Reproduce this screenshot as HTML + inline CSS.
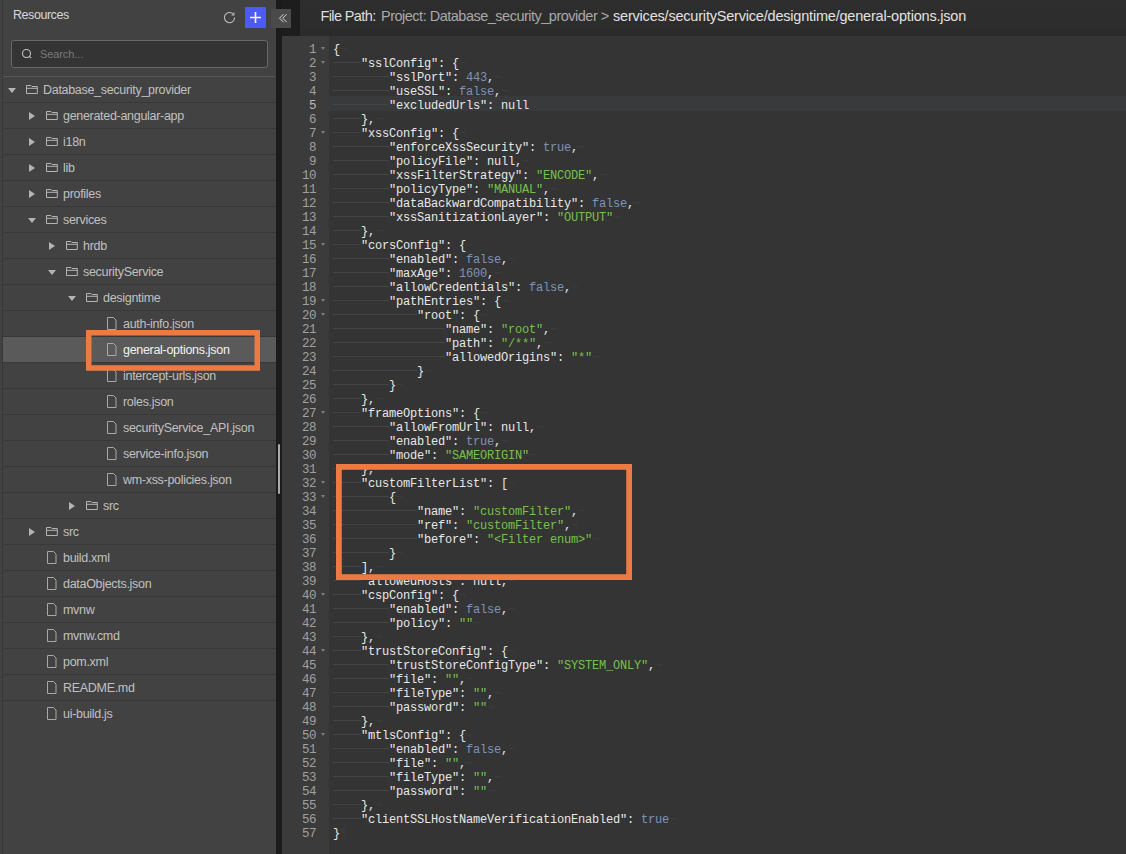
<!DOCTYPE html>
<html><head><meta charset="utf-8">
<style>
*{box-sizing:border-box;margin:0;padding:0}
html,body{width:1126px;height:854px;overflow:hidden;background:#1d1d1d;font-family:"Liberation Sans",sans-serif}
#side{position:absolute;left:0;top:0;width:276px;height:854px;background:#424242}
#side .vline{position:absolute;left:2px;top:0;width:1px;height:854px;background:#383838}
#res{position:absolute;left:13px;top:7px;font-size:12.5px;color:#d8d8d8;line-height:16px;letter-spacing:-0.45px}
#refresh{position:absolute;left:222px;top:10px;width:15px;height:15px}
#plus{position:absolute;left:245px;top:7px;width:21px;height:21px;background:#4d5af4;border-radius:1px}
#collapse{position:absolute;left:271px;top:9px;width:20px;height:19px;background:#4a4a4a}
#search{position:absolute;left:11px;top:40px;width:257px;height:28px;border:1px solid #686868;border-radius:3px;background:#343434}
#search span{position:absolute;left:28px;top:7px;font-size:11px;letter-spacing:-0.1px;color:#7a7a7a}
#divider{position:absolute;left:3px;top:76px;width:272px;height:1px;background:#555}
#tree{position:absolute;left:3px;top:77px;width:273px}
.r{position:relative;height:26px;border-bottom:1px solid #383838;font-size:12.5px;letter-spacing:-0.3px;color:#c0c0c0;white-space:nowrap}
.r .tx{position:absolute;top:5px;line-height:16px}
.r:last-child{border-bottom:0}
.r.sel{background:#5a5a5a;color:#f2f2f2}
.car{position:absolute;width:0;height:0}
.car.d{border-left:4px solid transparent;border-right:4px solid transparent;border-top:5px solid #b4b4b4;top:11px}
.car.rt{border-top:4px solid transparent;border-bottom:4px solid transparent;border-left:6px solid #b4b4b4;top:9px}
.fo{position:absolute;top:8px}
.fi{position:absolute;top:6px}
#split{position:absolute;left:276px;top:0;width:6px;height:854px;background:#1b1b1b}
#sb{position:absolute;left:277.6px;top:444px;width:2.6px;height:50px;background:#aaa;border-radius:1px}
#hdr{position:absolute;left:300px;top:0;width:826px;height:36px;background:linear-gradient(#2e2e2e,#2c2c2c 30px,#2a2a2a 34px,#2b2b2b 36px)}
#hdr .tx{position:absolute;top:8px;font-size:14.5px;line-height:17px;white-space:nowrap;color:#e2e2e2}
#hdr .p{color:#a8a8a8}
#ed{position:absolute;left:282px;top:36px;width:844px;height:818px;background:#343434}
#gut{position:absolute;left:0;top:0;width:47px;height:818px;background:#3b3b3b}
.g{position:relative;height:14px;line-height:14px;text-align:right;padding-right:13px;font-family:"Liberation Mono",monospace;font-size:12.5px;letter-spacing:-0.45px;color:#a0a0a0}
.g u{position:absolute;right:4.5px;top:4px;width:0;height:0;border-left:2.75px solid transparent;border-right:2.75px solid transparent;border-top:3px solid #7c7c7c}
.g.ga{color:#bababa}
#gl{position:absolute;left:0;top:7px;width:47px}
#code{position:absolute;left:51px;top:7px;right:0}
.l{height:14px;line-height:14px;white-space:pre;font-family:"Liberation Mono",monospace;font-size:12px;letter-spacing:-0.2px;color:#e8e8e8}
#al{position:absolute;left:47px;top:60px;width:797px;height:15px;background:#393a3c}
.l b{font-weight:normal}
.s{color:#74c246}
.n{color:#7d93b8}
.t{display:inline-block;height:14px;vertical-align:top;background:linear-gradient(#0000 5px,#444 5px,#444 6px,#0000 6px)}
.e{font-style:normal;color:#3b3b3b}
#boxes{position:absolute;left:0;top:0}
</style></head><body>
<div id="side">
<div class="vline"></div>
<div id="res">Resources</div>
<svg id="refresh" viewBox="0 0 15 15"><path d="M12.6 7.6a5.1 5.1 0 1 1-1.5-3.6" fill="none" stroke="#c4c4c4" stroke-width="1.05"/><path d="M11.9 2.6v2.3H9.6" fill="none" stroke="#c4c4c4" stroke-width="1.05"/></svg>
<div id="plus"><svg width="21" height="21" viewBox="0 0 21 21"><path d="M10.5 5v11M5 10.5h11" stroke="#f4f4ff" stroke-width="1.6"/></svg></div>
<div id="search"><svg style="position:absolute;left:9px;top:7px" width="12" height="12" viewBox="0 0 12 12"><circle cx="5.5" cy="5.5" r="4" fill="none" stroke="#c4c4c4" stroke-width="1.1"/><path d="M8.4 8.4l1.8 1.8" stroke="#c4c4c4" stroke-width="1.1"/></svg><span>Search...</span></div>
<div id="divider"></div>
<div id="tree">
<div class="r"><i class="car d" style="left:5px"></i><svg class="fo" style="left:23px" width="13" height="10" viewBox="0 0 13 10"><path d="M0.5 0.5h4.5l1 1h5.3v7h-10.8z M0.5 3.3h10.8" fill="none" stroke="#b4b4b4" stroke-width="1"/></svg><span class="tx" style="left:40px">Database_security_provider</span></div>
<div class="r"><i class="car rt" style="left:26px"></i><svg class="fo" style="left:43px" width="13" height="10" viewBox="0 0 13 10"><path d="M0.5 0.5h4.5l1 1h5.3v7h-10.8z M0.5 3.3h10.8" fill="none" stroke="#b4b4b4" stroke-width="1"/></svg><span class="tx" style="left:60px">generated-angular-app</span></div>
<div class="r"><i class="car rt" style="left:26px"></i><svg class="fo" style="left:43px" width="13" height="10" viewBox="0 0 13 10"><path d="M0.5 0.5h4.5l1 1h5.3v7h-10.8z M0.5 3.3h10.8" fill="none" stroke="#b4b4b4" stroke-width="1"/></svg><span class="tx" style="left:60px">i18n</span></div>
<div class="r"><i class="car rt" style="left:26px"></i><svg class="fo" style="left:43px" width="13" height="10" viewBox="0 0 13 10"><path d="M0.5 0.5h4.5l1 1h5.3v7h-10.8z M0.5 3.3h10.8" fill="none" stroke="#b4b4b4" stroke-width="1"/></svg><span class="tx" style="left:60px">lib</span></div>
<div class="r"><i class="car rt" style="left:26px"></i><svg class="fo" style="left:43px" width="13" height="10" viewBox="0 0 13 10"><path d="M0.5 0.5h4.5l1 1h5.3v7h-10.8z M0.5 3.3h10.8" fill="none" stroke="#b4b4b4" stroke-width="1"/></svg><span class="tx" style="left:60px">profiles</span></div>
<div class="r"><i class="car d" style="left:25px"></i><svg class="fo" style="left:43px" width="13" height="10" viewBox="0 0 13 10"><path d="M0.5 0.5h4.5l1 1h5.3v7h-10.8z M0.5 3.3h10.8" fill="none" stroke="#b4b4b4" stroke-width="1"/></svg><span class="tx" style="left:60px">services</span></div>
<div class="r"><i class="car rt" style="left:46px"></i><svg class="fo" style="left:63px" width="13" height="10" viewBox="0 0 13 10"><path d="M0.5 0.5h4.5l1 1h5.3v7h-10.8z M0.5 3.3h10.8" fill="none" stroke="#b4b4b4" stroke-width="1"/></svg><span class="tx" style="left:80px">hrdb</span></div>
<div class="r"><i class="car d" style="left:45px"></i><svg class="fo" style="left:63px" width="13" height="10" viewBox="0 0 13 10"><path d="M0.5 0.5h4.5l1 1h5.3v7h-10.8z M0.5 3.3h10.8" fill="none" stroke="#b4b4b4" stroke-width="1"/></svg><span class="tx" style="left:80px">securityService</span></div>
<div class="r"><i class="car d" style="left:65px"></i><svg class="fo" style="left:83px" width="13" height="10" viewBox="0 0 13 10"><path d="M0.5 0.5h4.5l1 1h5.3v7h-10.8z M0.5 3.3h10.8" fill="none" stroke="#b4b4b4" stroke-width="1"/></svg><span class="tx" style="left:100px">designtime</span></div>
<div class="r"><svg class="fi" style="left:104px" width="10" height="13" viewBox="0 0 10 13"><path d="M0.5 0.5h6l2.5 2.5v9.5h-8.5z" fill="none" stroke="#a8a8a8" stroke-width="1"/></svg><span class="tx" style="left:120px">auth-info.json</span></div>
<div class="r sel"><svg class="fi" style="left:104px" width="10" height="13" viewBox="0 0 10 13"><path d="M0.5 0.5h6l2.5 2.5v9.5h-8.5z" fill="none" stroke="#a8a8a8" stroke-width="1"/></svg><span class="tx" style="left:120px">general-options.json</span></div>
<div class="r"><svg class="fi" style="left:104px" width="10" height="13" viewBox="0 0 10 13"><path d="M0.5 0.5h6l2.5 2.5v9.5h-8.5z" fill="none" stroke="#a8a8a8" stroke-width="1"/></svg><span class="tx" style="left:120px">intercept-urls.json</span></div>
<div class="r"><svg class="fi" style="left:104px" width="10" height="13" viewBox="0 0 10 13"><path d="M0.5 0.5h6l2.5 2.5v9.5h-8.5z" fill="none" stroke="#a8a8a8" stroke-width="1"/></svg><span class="tx" style="left:120px">roles.json</span></div>
<div class="r"><svg class="fi" style="left:104px" width="10" height="13" viewBox="0 0 10 13"><path d="M0.5 0.5h6l2.5 2.5v9.5h-8.5z" fill="none" stroke="#a8a8a8" stroke-width="1"/></svg><span class="tx" style="left:120px">securityService_API.json</span></div>
<div class="r"><svg class="fi" style="left:104px" width="10" height="13" viewBox="0 0 10 13"><path d="M0.5 0.5h6l2.5 2.5v9.5h-8.5z" fill="none" stroke="#a8a8a8" stroke-width="1"/></svg><span class="tx" style="left:120px">service-info.json</span></div>
<div class="r"><svg class="fi" style="left:104px" width="10" height="13" viewBox="0 0 10 13"><path d="M0.5 0.5h6l2.5 2.5v9.5h-8.5z" fill="none" stroke="#a8a8a8" stroke-width="1"/></svg><span class="tx" style="left:120px">wm-xss-policies.json</span></div>
<div class="r"><i class="car rt" style="left:66px"></i><svg class="fo" style="left:83px" width="13" height="10" viewBox="0 0 13 10"><path d="M0.5 0.5h4.5l1 1h5.3v7h-10.8z M0.5 3.3h10.8" fill="none" stroke="#b4b4b4" stroke-width="1"/></svg><span class="tx" style="left:100px">src</span></div>
<div class="r"><i class="car rt" style="left:26px"></i><svg class="fo" style="left:43px" width="13" height="10" viewBox="0 0 13 10"><path d="M0.5 0.5h4.5l1 1h5.3v7h-10.8z M0.5 3.3h10.8" fill="none" stroke="#b4b4b4" stroke-width="1"/></svg><span class="tx" style="left:60px">src</span></div>
<div class="r"><svg class="fi" style="left:44px" width="10" height="13" viewBox="0 0 10 13"><path d="M0.5 0.5h6l2.5 2.5v9.5h-8.5z" fill="none" stroke="#a8a8a8" stroke-width="1"/></svg><span class="tx" style="left:60px">build.xml</span></div>
<div class="r"><svg class="fi" style="left:44px" width="10" height="13" viewBox="0 0 10 13"><path d="M0.5 0.5h6l2.5 2.5v9.5h-8.5z" fill="none" stroke="#a8a8a8" stroke-width="1"/></svg><span class="tx" style="left:60px">dataObjects.json</span></div>
<div class="r"><svg class="fi" style="left:44px" width="10" height="13" viewBox="0 0 10 13"><path d="M0.5 0.5h6l2.5 2.5v9.5h-8.5z" fill="none" stroke="#a8a8a8" stroke-width="1"/></svg><span class="tx" style="left:60px">mvnw</span></div>
<div class="r"><svg class="fi" style="left:44px" width="10" height="13" viewBox="0 0 10 13"><path d="M0.5 0.5h6l2.5 2.5v9.5h-8.5z" fill="none" stroke="#a8a8a8" stroke-width="1"/></svg><span class="tx" style="left:60px">mvnw.cmd</span></div>
<div class="r"><svg class="fi" style="left:44px" width="10" height="13" viewBox="0 0 10 13"><path d="M0.5 0.5h6l2.5 2.5v9.5h-8.5z" fill="none" stroke="#a8a8a8" stroke-width="1"/></svg><span class="tx" style="left:60px">pom.xml</span></div>
<div class="r"><svg class="fi" style="left:44px" width="10" height="13" viewBox="0 0 10 13"><path d="M0.5 0.5h6l2.5 2.5v9.5h-8.5z" fill="none" stroke="#a8a8a8" stroke-width="1"/></svg><span class="tx" style="left:60px">README.md</span></div>
<div class="r"><svg class="fi" style="left:44px" width="10" height="13" viewBox="0 0 10 13"><path d="M0.5 0.5h6l2.5 2.5v9.5h-8.5z" fill="none" stroke="#a8a8a8" stroke-width="1"/></svg><span class="tx" style="left:60px">ui-build.js</span></div>
</div>
</div>
<div id="split"></div>
<div id="collapse"><svg width="20" height="19" viewBox="0 0 20 19"><path d="M12.5 5.2l-4 4 4 4M15.7 5.2l-4 4 4 4" fill="none" stroke="#d8d8d8" stroke-width="1"/></svg></div>
<div id="sb"></div>
<div id="hdr"><span class="tx" style="left:20.5px;letter-spacing:-0.62px;color:#dedede">File Path:</span><span class="tx p" style="left:81px;letter-spacing:-0.5px">Project: Database_security_provider &gt;</span><span class="tx" style="left:313px;letter-spacing:-0.2px">services/securityService/designtime/general-options.json</span></div>
<div id="ed">
<div id="gut"><div id="gl">
<div class="g">1<u></u></div>
<div class="g">2<u></u></div>
<div class="g">3</div>
<div class="g">4</div>
<div class="g ga">5</div>
<div class="g">6</div>
<div class="g">7<u></u></div>
<div class="g">8</div>
<div class="g">9</div>
<div class="g">10</div>
<div class="g">11</div>
<div class="g">12</div>
<div class="g">13</div>
<div class="g">14</div>
<div class="g">15<u></u></div>
<div class="g">16</div>
<div class="g">17</div>
<div class="g">18</div>
<div class="g">19<u></u></div>
<div class="g">20<u></u></div>
<div class="g">21</div>
<div class="g">22</div>
<div class="g">23</div>
<div class="g">24</div>
<div class="g">25</div>
<div class="g">26</div>
<div class="g">27<u></u></div>
<div class="g">28</div>
<div class="g">29</div>
<div class="g">30</div>
<div class="g">31</div>
<div class="g">32<u></u></div>
<div class="g">33<u></u></div>
<div class="g">34</div>
<div class="g">35</div>
<div class="g">36</div>
<div class="g">37</div>
<div class="g">38</div>
<div class="g">39</div>
<div class="g">40<u></u></div>
<div class="g">41</div>
<div class="g">42</div>
<div class="g">43</div>
<div class="g">44<u></u></div>
<div class="g">45</div>
<div class="g">46</div>
<div class="g">47</div>
<div class="g">48</div>
<div class="g">49</div>
<div class="g">50<u></u></div>
<div class="g">51</div>
<div class="g">52</div>
<div class="g">53</div>
<div class="g">54</div>
<div class="g">55</div>
<div class="g">56</div>
<div class="g">57</div>
</div></div>
<div id="al"></div>
<div id="code">
<div class="l">{<i class="e">¬</i></div>
<div class="l"><i class="t" style="width:28px"></i>"sslConfig": {<i class="e">¬</i></div>
<div class="l"><i class="t" style="width:56px"></i>"sslPort": <b class="n">443</b>,<i class="e">¬</i></div>
<div class="l"><i class="t" style="width:56px"></i>"useSSL": <b class="n">false</b>,<i class="e">¬</i></div>
<div class="l a"><i class="t" style="width:56px"></i>"excludedUrls": null<i class="e">¬</i></div>
<div class="l"><i class="t" style="width:28px"></i>},<i class="e">¬</i></div>
<div class="l"><i class="t" style="width:28px"></i>"xssConfig": {<i class="e">¬</i></div>
<div class="l"><i class="t" style="width:56px"></i>"enforceXssSecurity": <b class="n">true</b>,<i class="e">¬</i></div>
<div class="l"><i class="t" style="width:56px"></i>"policyFile": null,<i class="e">¬</i></div>
<div class="l"><i class="t" style="width:56px"></i>"xssFilterStrategy": <b class="s">"ENCODE"</b>,<i class="e">¬</i></div>
<div class="l"><i class="t" style="width:56px"></i>"policyType": <b class="s">"MANUAL"</b>,<i class="e">¬</i></div>
<div class="l"><i class="t" style="width:56px"></i>"dataBackwardCompatibility": <b class="n">false</b>,<i class="e">¬</i></div>
<div class="l"><i class="t" style="width:56px"></i>"xssSanitizationLayer": <b class="s">"OUTPUT"</b><i class="e">¬</i></div>
<div class="l"><i class="t" style="width:28px"></i>},<i class="e">¬</i></div>
<div class="l"><i class="t" style="width:28px"></i>"corsConfig": {<i class="e">¬</i></div>
<div class="l"><i class="t" style="width:56px"></i>"enabled": <b class="n">false</b>,<i class="e">¬</i></div>
<div class="l"><i class="t" style="width:56px"></i>"maxAge": <b class="n">1600</b>,<i class="e">¬</i></div>
<div class="l"><i class="t" style="width:56px"></i>"allowCredentials": <b class="n">false</b>,<i class="e">¬</i></div>
<div class="l"><i class="t" style="width:56px"></i>"pathEntries": {<i class="e">¬</i></div>
<div class="l"><i class="t" style="width:84px"></i>"root": {<i class="e">¬</i></div>
<div class="l"><i class="t" style="width:112px"></i>"name": <b class="s">"root"</b>,<i class="e">¬</i></div>
<div class="l"><i class="t" style="width:112px"></i>"path": <b class="s">"/**"</b>,<i class="e">¬</i></div>
<div class="l"><i class="t" style="width:112px"></i>"allowedOrigins": <b class="s">"*"</b><i class="e">¬</i></div>
<div class="l"><i class="t" style="width:84px"></i>}<i class="e">¬</i></div>
<div class="l"><i class="t" style="width:56px"></i>}<i class="e">¬</i></div>
<div class="l"><i class="t" style="width:28px"></i>},<i class="e">¬</i></div>
<div class="l"><i class="t" style="width:28px"></i>"frameOptions": {<i class="e">¬</i></div>
<div class="l"><i class="t" style="width:56px"></i>"allowFromUrl": null,<i class="e">¬</i></div>
<div class="l"><i class="t" style="width:56px"></i>"enabled": <b class="n">true</b>,<i class="e">¬</i></div>
<div class="l"><i class="t" style="width:56px"></i>"mode": <b class="s">"SAMEORIGIN"</b><i class="e">¬</i></div>
<div class="l"><i class="t" style="width:28px"></i>},<i class="e">¬</i></div>
<div class="l"><i class="t" style="width:28px"></i>"customFilterList": [<i class="e">¬</i></div>
<div class="l"><i class="t" style="width:56px"></i>{<i class="e">¬</i></div>
<div class="l"><i class="t" style="width:84px"></i>"name": <b class="s">"customFilter"</b>,<i class="e">¬</i></div>
<div class="l"><i class="t" style="width:84px"></i>"ref": <b class="s">"customFilter"</b>,<i class="e">¬</i></div>
<div class="l"><i class="t" style="width:84px"></i>"before": <b class="s">"&lt;Filter enum&gt;"</b><i class="e">¬</i></div>
<div class="l"><i class="t" style="width:56px"></i>}<i class="e">¬</i></div>
<div class="l"><i class="t" style="width:28px"></i>],<i class="e">¬</i></div>
<div class="l"><i class="t" style="width:28px"></i>"allowedHosts": null,<i class="e">¬</i></div>
<div class="l"><i class="t" style="width:28px"></i>"cspConfig": {<i class="e">¬</i></div>
<div class="l"><i class="t" style="width:56px"></i>"enabled": <b class="n">false</b>,<i class="e">¬</i></div>
<div class="l"><i class="t" style="width:56px"></i>"policy": <b class="s">""</b><i class="e">¬</i></div>
<div class="l"><i class="t" style="width:28px"></i>},<i class="e">¬</i></div>
<div class="l"><i class="t" style="width:28px"></i>"trustStoreConfig": {<i class="e">¬</i></div>
<div class="l"><i class="t" style="width:56px"></i>"trustStoreConfigType": <b class="s">"SYSTEM_ONLY"</b>,<i class="e">¬</i></div>
<div class="l"><i class="t" style="width:56px"></i>"file": <b class="s">""</b>,<i class="e">¬</i></div>
<div class="l"><i class="t" style="width:56px"></i>"fileType": <b class="s">""</b>,<i class="e">¬</i></div>
<div class="l"><i class="t" style="width:56px"></i>"password": <b class="s">""</b><i class="e">¬</i></div>
<div class="l"><i class="t" style="width:28px"></i>},<i class="e">¬</i></div>
<div class="l"><i class="t" style="width:28px"></i>"mtlsConfig": {<i class="e">¬</i></div>
<div class="l"><i class="t" style="width:56px"></i>"enabled": <b class="n">false</b>,<i class="e">¬</i></div>
<div class="l"><i class="t" style="width:56px"></i>"file": <b class="s">""</b>,<i class="e">¬</i></div>
<div class="l"><i class="t" style="width:56px"></i>"fileType": <b class="s">""</b>,<i class="e">¬</i></div>
<div class="l"><i class="t" style="width:56px"></i>"password": <b class="s">""</b><i class="e">¬</i></div>
<div class="l"><i class="t" style="width:28px"></i>},<i class="e">¬</i></div>
<div class="l"><i class="t" style="width:28px"></i>"clientSSLHostNameVerificationEnabled": <b class="n">true</b><i class="e">¬</i></div>
<div class="l">}<i class="e">¶</i></div>
</div>
</div>
<svg id="boxes" width="1126" height="854"><rect x="88.75" y="332.75" width="168.5" height="35.25" fill="none" stroke="#ec7a42" stroke-width="5.5"/><rect x="338.9" y="466.9" width="290.2" height="110.2" fill="none" stroke="#ec7a42" stroke-width="5.8"/></svg>
</body></html>
